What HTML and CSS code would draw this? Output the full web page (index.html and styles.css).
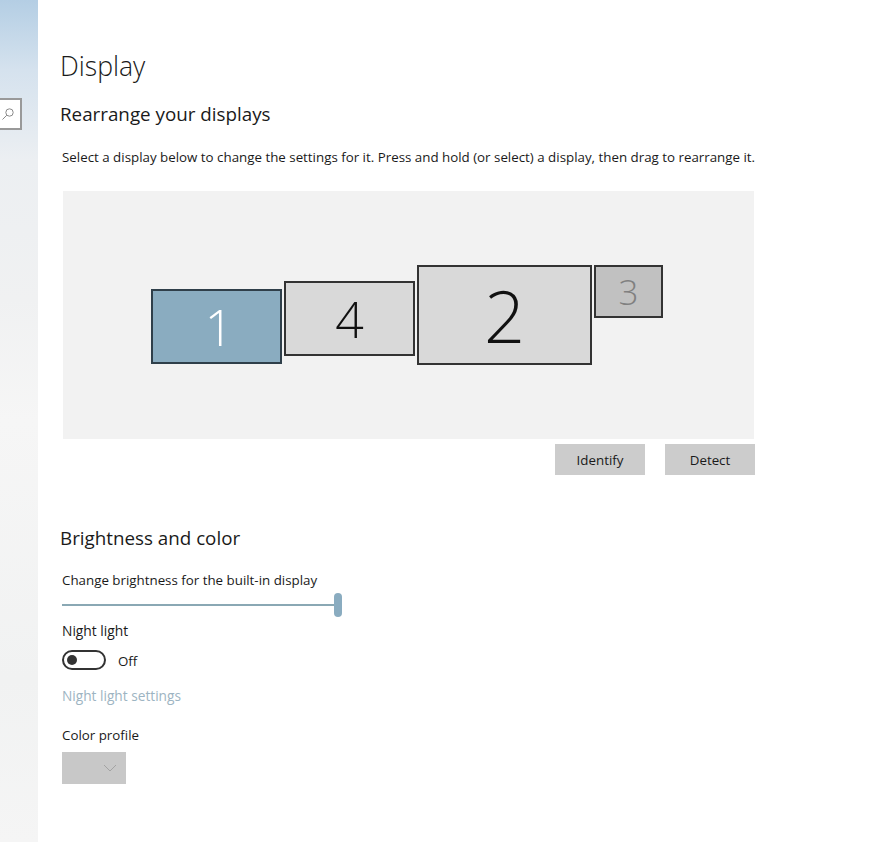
FILE: index.html
```html
<!DOCTYPE html>
<html lang="en">
<head>
    <meta charset="UTF-8">
    <meta name="viewport" content="width=device-width, initial-scale=1.0">
    <title>Display</title>
    <link rel="stylesheet" href="styles.css">
</head>
<body>
    <div class="sidebar">
        <div class="search">
            <svg width="14" height="14" viewBox="0 0 14 14" fill="none" stroke="#8a8a8a" stroke-width="1">
                <circle cx="8.5" cy="5.5" r="3.7"/>
                <path d="M5.8 8.2 1.5 12.5"/>
            </svg>
        </div>
    </div>
    <div class="main">
        <h1>Display</h1>
        <h2>Rearrange your displays</h2>
        <p class="hint">Select a display below to change the settings for it. Press and hold (or select) a display, then drag to rearrange it.</p>
        <div class="canvas">
            <div class="monitor selected m1">1</div>
            <div class="monitor m4">4</div>
            <div class="monitor m2">2</div>
            <div class="monitor inactive m3">3</div>
        </div>
        <div class="actions">
            <button>Identify</button>
            <button>Detect</button>
        </div>
        <h2 class="section">Brightness and color</h2>
        <label class="field-label">Change brightness for the built-in display</label>
        <div class="slider"><span class="thumb"></span></div>
        <label class="field-label night">Night light</label>
        <div class="toggle-row">
            <span class="toggle"><span class="knob"></span></span>
            <span class="toggle-text">Off</span>
        </div>
        <a class="link">Night light settings</a>
        <label class="field-label profile">Color profile</label>
        <div class="dropdown">
            <svg width="14" height="8" viewBox="0 0 14 8" fill="none" stroke="#a3a3a3" stroke-width="1">
                <path d="M1 1 7 7 13 1"/>
            </svg>
        </div>
    </div>
</body>
</html>
```

FILE: styles.css
```css
body {
    display: flex;
    margin: 0;
    height: 842px;
    overflow: hidden;
    background-color: #fff;
    color: #1a1a1a;
    font-family: 'Open Sans', 'Noto Sans', sans-serif;
    font-size: 13.33px;
}
.sidebar {
    width: 38px;
    flex-shrink: 0;
    padding-top: 98px;
    box-sizing: border-box;
    background: linear-gradient(180deg, #b4cee4 0, #d5e2ee 70px, #eceff2 160px, #f0f1f2 300px, #f6f6f6 420px, #f1f2f2 680px, #f5f5f5 842px);
}
.search {
    display: flex;
    align-items: center;
    justify-content: flex-end;
    width: 22px;
    height: 32px;
    padding-right: 5px;
    box-sizing: border-box;
    background-color: #fff;
    border: 2px solid #999;
    border-left: none;
}
.main {
    flex: 1;
    padding-left: 22px;
}
h1 {
    margin: 48px 0 0;
    height: 36px;
    font-size: 26.6px;
    line-height: 36px;
    font-weight: 300;
}
h2 {
    margin: 16px 0 0;
    height: 28px;
    font-size: 18.8px;
    line-height: 28px;
    font-weight: 400;
}
.hint {
    margin: 20px 0 0 2px;
    width: 720px;
    height: 18px;
    line-height: 18px;
    white-space: nowrap;
}
.canvas {
    position: relative;
    margin: 25px 0 0 3px;
    width: 691px;
    height: 248px;
    background-color: #f2f2f2;
}
.monitor {
    position: absolute;
    display: flex;
    align-items: center;
    justify-content: center;
    box-sizing: border-box;
    background-color: #d9d9d9;
    border: 2px solid #333;
    color: #111;
    font-weight: 300;
}
.m1 { left: 88px; top: 98px; width: 131px; height: 75px; padding-left: 5px; font-size: 50px; }
.m4 { left: 221px; top: 90px; width: 131px; height: 75px; font-size: 50px; }
.m2 { left: 354px; top: 74px; width: 175px; height: 100px; font-size: 72px; }
.m3 { left: 531px; top: 74px; width: 69px; height: 53px; font-size: 35px; }
.selected {
    background-color: #8aacc0;
    border-color: #2f3f4a;
    color: #fff;
}
.inactive {
    background-color: #c1c1c1;
    color: #808080;
}
.actions {
    display: flex;
    justify-content: flex-end;
    gap: 20px;
    margin-top: 5px;
    width: 695px;
}
button {
    width: 90px;
    height: 31px;
    padding: 0;
    border: none;
    background-color: #cccccc;
    color: #1a1a1a;
    font-family: inherit;
    font-size: 13.33px;
}
.section {
    margin-top: 49px;
}
.field-label {
    display: block;
    margin: 19px 0 0 2px;
    height: 18px;
    line-height: 18px;
}
.slider {
    position: relative;
    margin: 15px 0 0 2px;
    width: 276px;
    height: 2px;
    background-color: #8aa8b4;
}
.thumb {
    position: absolute;
    right: -4px;
    top: -11px;
    width: 8px;
    height: 24px;
    border-radius: 4px;
    background-color: #8aacc0;
}
.night {
    margin-top: 16px;
    font-size: 13.8px;
}
.toggle-row {
    display: flex;
    align-items: center;
    gap: 12px;
    margin: 10px 0 0 2px;
    height: 20px;
}
.toggle {
    display: flex;
    align-items: center;
    width: 44px;
    height: 20px;
    padding-left: 3px;
    box-sizing: border-box;
    border: 2px solid #333;
    border-radius: 10px;
}
.knob {
    width: 10px;
    height: 10px;
    border-radius: 50%;
    background-color: #333;
}
.toggle-text {
    padding-top: 2px;
}
.link {
    display: block;
    margin: 17px 0 0 2px;
    height: 18px;
    line-height: 18px;
    font-size: 13.7px;
    color: #9db4c2;
}
.profile {
    margin-top: 21px;
}
.dropdown {
    display: flex;
    align-items: center;
    justify-content: flex-end;
    margin: 8px 0 0 2px;
    width: 64px;
    height: 32px;
    padding-right: 9px;
    box-sizing: border-box;
    background-color: #c8c8c8;
}
```
